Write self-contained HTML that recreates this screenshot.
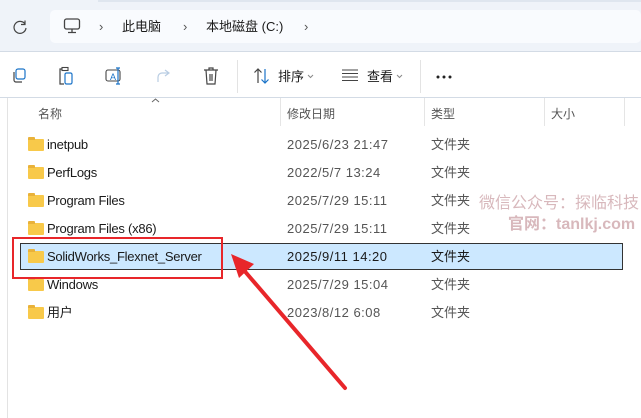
<!DOCTYPE html>
<html><head><meta charset="utf-8"><style>
body{margin:0;width:641px;height:418px;overflow:hidden;background:#fff;font-family:"Liberation Sans","Noto Sans CJK SC",sans-serif;position:relative}
.a{position:absolute}
.t{font-size:13px;line-height:16px;color:#1a1a1a;white-space:nowrap}
.g{color:#555}
.n{letter-spacing:-0.25px}
.d{letter-spacing:0.5px}
.fold{position:absolute;width:16px;height:12px;background:#f8c94a;border-radius:1px}
.fold:before{content:"";position:absolute;left:0;top:-2px;width:7px;height:3px;background:#e9b23a;border-radius:1px 1px 0 0}
</style></head><body>
<div class="a" style="left:0;top:0;width:641px;height:52px;background:#eff3f9"></div>
<div class="a" style="left:98px;top:0;width:543px;height:2px;background:#dfe6ef"></div>
<div class="a" style="left:50px;top:10px;width:591px;height:33px;background:#f9fbfe;border-radius:5px"></div>
<div class="a" style="left:0;top:51px;width:641px;height:1px;background:#d3dbe5"></div>
<svg class="a" style="left:12px;top:19px" width="16" height="16" viewBox="0 0 16 16"><path d="M13 5A6 6 0 1 0 14 9" fill="none" stroke="#444" stroke-width="1.2"/><path d="M13 1.5V5.5H9" fill="none" stroke="#444" stroke-width="1.2"/></svg>
<svg class="a" style="left:63px;top:17px" width="18" height="18" viewBox="0 0 18 18"><rect x="1.5" y="2" width="15" height="10" rx="2" fill="none" stroke="#444" stroke-width="1.3"/><path d="M9 12v3M5 15.5h8" stroke="#444" stroke-width="1.3"/></svg>
<div class="a t" style="left:99px;top:19px;color:#555">›</div>
<div class="a t" style="left:122px;top:19px">此电脑</div>
<div class="a t" style="left:183px;top:19px;color:#555">›</div>
<div class="a t" style="left:206px;top:19px">本地磁盘 (C:)</div>
<div class="a t" style="left:304px;top:19px;color:#555">›</div>
<!-- toolbar -->
<svg class="a" style="left:10px;top:67px" width="18" height="18" viewBox="0 0 18 18"><rect x="6" y="2" width="9" height="10" rx="2" fill="none" stroke="#1a73c8" stroke-width="1.2"/><path d="M4 5v8a2 2 0 0 0 2 2h6" fill="none" stroke="#444" stroke-width="1.2"/></svg>
<svg class="a" style="left:57px;top:66px" width="18" height="20" viewBox="0 0 18 20"><path d="M5 3H3v15h4" fill="none" stroke="#444" stroke-width="1.2"/><rect x="5" y="1.5" width="6" height="3" fill="none" stroke="#444" stroke-width="1.1"/><rect x="8" y="7" width="7" height="11" rx="1.5" fill="none" stroke="#1a73c8" stroke-width="1.2"/></svg>
<svg class="a" style="left:104px;top:66px" width="20" height="20" viewBox="0 0 20 20"><rect x="2" y="4" width="14" height="11" rx="2" fill="none" stroke="#444" stroke-width="1.1"/><text x="6" y="14" font-size="9" fill="#1a73c8" font-family="Liberation Sans">A</text><path d="M14 2v16M12 2h4M12 18h4" stroke="#1a73c8" stroke-width="1.2"/></svg>
<svg class="a" style="left:155px;top:67px" width="18" height="18" viewBox="0 0 18 18"><path d="M3 15V10a4 4 0 0 1 4-4h6M10 3l4 3-4 3" fill="none" stroke="#b9cde3" stroke-width="1.2"/></svg>
<svg class="a" style="left:202px;top:66px" width="18" height="20" viewBox="0 0 18 20"><path d="M2 4h14M7 4V2h4v2M4 4l1 14h8l1-14M8 8v7M10 8v7" fill="none" stroke="#444" stroke-width="1.2"/></svg>
<div class="a" style="left:237px;top:60px;width:1px;height:33px;background:#e3e3e3"></div>
<svg class="a" style="left:253px;top:67px" width="18" height="18" viewBox="0 0 18 18"><path d="M5 16V2M1.5 5.5L5 2l3.5 3.5" fill="none" stroke="#444" stroke-width="1.2"/><path d="M12 2v14M8.5 12.5L12 16l3.5-3.5" fill="none" stroke="#1a73c8" stroke-width="1.2"/></svg>
<div class="a t" style="left:278px;top:69px">排序</div>
<svg class="a" style="left:307px;top:74px" width="7" height="5" viewBox="0 0 7 5"><path d="M1 1l2.5 2.5L6 1" fill="none" stroke="#888"/></svg>
<svg class="a" style="left:342px;top:69px" width="16" height="12" viewBox="0 0 16 12"><path d="M0 1h16M0 4.5h16M0 8h16M0 11.5h16" stroke="#444" stroke-width="1"/></svg>
<div class="a t" style="left:367px;top:69px">查看</div>
<svg class="a" style="left:396px;top:74px" width="7" height="5" viewBox="0 0 7 5"><path d="M1 1l2.5 2.5L6 1" fill="none" stroke="#888"/></svg>
<div class="a" style="left:420px;top:60px;width:1px;height:33px;background:#e3e3e3"></div>
<svg class="a" style="left:436px;top:75px" width="18" height="4" viewBox="0 0 18 4"><circle cx="2" cy="2" r="1.5" fill="#222"/><circle cx="8" cy="2" r="1.5" fill="#222"/><circle cx="14" cy="2" r="1.5" fill="#222"/></svg>
<div class="a" style="left:0;top:97px;width:641px;height:1px;background:#d3dbe5"></div>
<div class="a" style="left:7px;top:98px;width:1px;height:320px;background:#e3e3e3"></div>
<!-- header -->
<svg class="a" style="left:151px;top:98px" width="9" height="5" viewBox="0 0 9 5"><path d="M1 4l3.5-3L8 4" fill="none" stroke="#666"/></svg>
<div class="a t g" style="left:38px;top:106px;font-size:12px">名称</div>
<div class="a" style="left:280px;top:98px;width:1px;height:28px;background:#e5e5e5"></div>
<div class="a t g" style="left:287px;top:106px;font-size:12px">修改日期</div>
<div class="a" style="left:424px;top:98px;width:1px;height:28px;background:#e5e5e5"></div>
<div class="a t g" style="left:431px;top:106px;font-size:12px">类型</div>
<div class="a" style="left:544px;top:98px;width:1px;height:28px;background:#e5e5e5"></div>
<div class="a t g" style="left:551px;top:106px;font-size:12px">大小</div>
<div class="a" style="left:624px;top:98px;width:1px;height:28px;background:#e5e5e5"></div>
<!-- selected -->
<div class="a" style="left:20px;top:243px;width:601px;height:25px;background:#cce8ff;border:1px solid #333"></div>
<!-- rows -->
<div class="fold" style="left:28px;top:139px"></div><div class="a t n" style="left:47px;top:137px">inetpub</div><div class="a t g d" style="left:287px;top:137px">2025/6/23 21:47</div><div class="a t g" style="left:431px;top:137px">文件夹</div>
<div class="fold" style="left:28px;top:167px"></div><div class="a t n" style="left:47px;top:165px">PerfLogs</div><div class="a t g d" style="left:287px;top:165px">2022/5/7 13:24</div><div class="a t g" style="left:431px;top:165px">文件夹</div>
<div class="fold" style="left:28px;top:195px"></div><div class="a t n" style="left:47px;top:193px">Program Files</div><div class="a t g d" style="left:287px;top:193px">2025/7/29 15:11</div><div class="a t g" style="left:431px;top:193px">文件夹</div>
<div class="fold" style="left:28px;top:223px"></div><div class="a t n" style="left:47px;top:221px">Program Files (x86)</div><div class="a t g d" style="left:287px;top:221px">2025/7/29 15:11</div><div class="a t g" style="left:431px;top:221px">文件夹</div>
<div class="fold" style="left:28px;top:251px"></div><div class="a t n" style="left:47px;top:249px">SolidWorks_Flexnet_Server</div><div class="a t d" style="left:287px;top:249px">2025/9/11 14:20</div><div class="a t" style="left:431px;top:249px">文件夹</div>
<div class="fold" style="left:28px;top:279px"></div><div class="a t n" style="left:47px;top:277px">Windows</div><div class="a t g d" style="left:287px;top:277px">2025/7/29 15:04</div><div class="a t g" style="left:431px;top:277px">文件夹</div>
<div class="fold" style="left:28px;top:307px"></div><div class="a t n" style="left:47px;top:305px">用户</div><div class="a t g d" style="left:287px;top:305px">2023/8/12 6:08</div><div class="a t g" style="left:431px;top:305px">文件夹</div>
<!-- watermark -->
<div class="a" style="left:479px;top:194px;font-size:16px;line-height:20px;color:#d8b8bc;white-space:nowrap">微信公众号：探临科技</div>
<div class="a" style="left:508px;top:215px;font-size:16px;line-height:20px;color:#d8b8bc;white-space:nowrap;font-weight:bold">官网：tanlkj.com</div>
<!-- red box + arrow -->
<div class="a" style="left:12px;top:237px;width:207px;height:38px;border:2px solid #e8262a"></div>
<svg class="a" style="left:0;top:0" width="641" height="418"><path d="M345 388L242 268" stroke="#e8262a" stroke-width="4" stroke-linecap="round"/><path d="M231 254L254 264L239 278Z" fill="#e8262a"/></svg>
</body></html>
